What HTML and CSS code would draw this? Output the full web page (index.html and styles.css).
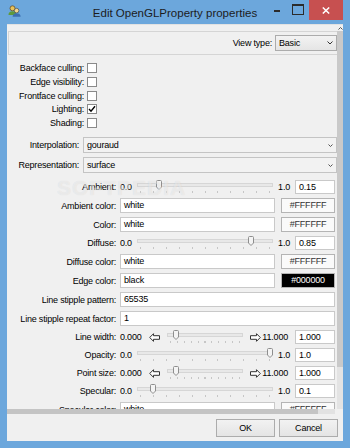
FILE: index.html
```html
<!DOCTYPE html>
<html lang="en">
<head>
  <meta charset="UTF-8">
  <meta name="viewport" content="width=device-width, initial-scale=1.0">
  <title>Edit OpenGLProperty properties</title>
  <link rel="stylesheet" href="styles.css">
</head>
<body>
  <div class="window">
    <!-- title bar -->
    <div class="titlebar">
      <svg class="app-icon" width="13" height="12" viewBox="0 0 13 12">
        <circle cx="4.5" cy="3.3" r="2.5" fill="#e9c35a" stroke="#5b4320" stroke-width=".7"/>
        <path d="M0.5 10 Q0.5 6.3 4.5 6.3 Q8.5 6.3 8.5 10 Z" fill="#5f9a3a"/>
        <circle cx="8.6" cy="5.6" r="2.3" fill="#f3d78e" stroke="#4a4a4a" stroke-width=".7"/>
        <path d="M4.6 11.8 Q4.6 8.3 8.6 8.3 Q12.6 8.3 12.6 11.8 Z" fill="#3d6fb0"/>
      </svg>
      <div class="title">Edit OpenGLProperty properties</div>
      <div class="caption">
        <span class="cap-min"></span>
        <span class="cap-max"></span>
        <span class="cap-close">
          <svg width="8" height="7" viewBox="0 0 8 7"><path d="M0.8 0.5 L7.2 6.5 M7.2 0.5 L0.8 6.5" stroke="#fff" stroke-width="1.5"/></svg>
        </span>
      </div>
    </div>

    <div class="client">
      <div class="scrollarea">
        <div class="viewport">
          <div class="watermark">SOFTPEDIA</div>

          <div class="view-frame">
            <span>View type:</span>
            <div class="combo small">Basic
              <svg width="6" height="4" viewBox="0 0 6 4"><path d="M0.5 0.5 L3 3 L5.5 0.5" stroke="#333" fill="none"/></svg>
            </div>
          </div>

          <div class="checks">
            <label>Backface culling:</label><span class="check"></span>
            <label>Edge visibility:</label><span class="check"></span>
            <label>Frontface culling:</label><span class="check"></span>
            <label>Lighting:</label>
            <span class="check"><svg width="8" height="8" viewBox="0 0 8 8"><path d="M1 4 L3 6.2 L7 1.2" stroke="#000" stroke-width="1.4" fill="none"/></svg></span>
            <label>Shading:</label><span class="check"></span>
          </div>

          <div class="combos">
            <label>Interpolation:</label>
            <div class="combo">gouraud
              <svg width="5" height="3" viewBox="0 0 5 3"><path d="M0.5 0.5 L2.5 2.5 L4.5 0.5" stroke="#555" fill="none"/></svg>
            </div>
            <label>Representation:</label>
            <div class="combo">surface
              <svg width="5" height="3" viewBox="0 0 5 3"><path d="M0.5 0.5 L2.5 2.5 L4.5 0.5" stroke="#555" fill="none"/></svg>
            </div>
          </div>

          <div class="props">
            <label>Ambient:</label>
            <div class="range">
              <span>0.0</span>
              <div class="slider" style="--v:.15"><span class="groove"></span><span class="ticks"></span>
                <svg class="handle" width="6" height="10" viewBox="0 0 6 10"><path d="M0.5 1.5 Q0.5 0.5 1.5 0.5 H4.5 Q5.5 0.5 5.5 1.5 V7 L3 9.5 L0.5 7 Z" fill="#f4f4f4" stroke="#8e8e8e"/></svg>
              </div>
              <span>1.0</span>
              <div class="field">0.15</div>
            </div>

            <label>Ambient color:</label>
            <div class="color-row"><div class="field">white</div><div class="swatch">#FFFFFF</div></div>

            <label>Color:</label>
            <div class="color-row"><div class="field">white</div><div class="swatch">#FFFFFF</div></div>

            <label>Diffuse:</label>
            <div class="range">
              <span>0.0</span>
              <div class="slider" style="--v:.85"><span class="groove"></span><span class="ticks"></span>
                <svg class="handle" width="6" height="10" viewBox="0 0 6 10"><path d="M0.5 1.5 Q0.5 0.5 1.5 0.5 H4.5 Q5.5 0.5 5.5 1.5 V7 L3 9.5 L0.5 7 Z" fill="#f4f4f4" stroke="#8e8e8e"/></svg>
              </div>
              <span>1.0</span>
              <div class="field">0.85</div>
            </div>

            <label>Diffuse color:</label>
            <div class="color-row"><div class="field">white</div><div class="swatch">#FFFFFF</div></div>

            <label>Edge color:</label>
            <div class="color-row"><div class="field">black</div><div class="swatch dark">#000000</div></div>

            <label>Line stipple pattern:</label>
            <div class="field">65535</div>

            <label>Line stipple repeat factor:</label>
            <div class="field">1</div>

            <label>Line width:</label>
            <div class="range wide">
              <span>0.000</span>
              <svg class="arrow" width="11" height="9" viewBox="0 0 11 9"><path d="M0.7 4.5 L4.5 0.7 V2.7 H10.5 V6.3 H4.5 V8.3 Z" fill="#fff" stroke="#333"/></svg>
              <div class="slider" style="--v:.0909"><span class="groove"></span><span class="ticks"></span>
                <svg class="handle" width="6" height="10" viewBox="0 0 6 10"><path d="M0.5 1.5 Q0.5 0.5 1.5 0.5 H4.5 Q5.5 0.5 5.5 1.5 V7 L3 9.5 L0.5 7 Z" fill="#f4f4f4" stroke="#8e8e8e"/></svg>
              </div>
              <svg class="arrow right" width="11" height="9" viewBox="0 0 11 9"><path d="M10.3 4.5 L6.5 0.7 V2.7 H0.5 V6.3 H6.5 V8.3 Z" fill="#fff" stroke="#333"/></svg>
              <span>11.000</span>
              <div class="field">1.000</div>
            </div>

            <label>Opacity:</label>
            <div class="range">
              <span>0.0</span>
              <div class="slider" style="--v:1"><span class="groove"></span><span class="ticks"></span>
                <svg class="handle" width="6" height="10" viewBox="0 0 6 10"><path d="M0.5 1.5 Q0.5 0.5 1.5 0.5 H4.5 Q5.5 0.5 5.5 1.5 V7 L3 9.5 L0.5 7 Z" fill="#f4f4f4" stroke="#8e8e8e"/></svg>
              </div>
              <span>1.0</span>
              <div class="field">1.0</div>
            </div>

            <label>Point size:</label>
            <div class="range wide">
              <span>0.000</span>
              <svg class="arrow" width="11" height="9" viewBox="0 0 11 9"><path d="M0.7 4.5 L4.5 0.7 V2.7 H10.5 V6.3 H4.5 V8.3 Z" fill="#fff" stroke="#333"/></svg>
              <div class="slider" style="--v:.0909"><span class="groove"></span><span class="ticks"></span>
                <svg class="handle" width="6" height="10" viewBox="0 0 6 10"><path d="M0.5 1.5 Q0.5 0.5 1.5 0.5 H4.5 Q5.5 0.5 5.5 1.5 V7 L3 9.5 L0.5 7 Z" fill="#f4f4f4" stroke="#8e8e8e"/></svg>
              </div>
              <svg class="arrow right" width="11" height="9" viewBox="0 0 11 9"><path d="M10.3 4.5 L6.5 0.7 V2.7 H0.5 V6.3 H6.5 V8.3 Z" fill="#fff" stroke="#333"/></svg>
              <span>11.000</span>
              <div class="field">1.000</div>
            </div>

            <label>Specular:</label>
            <div class="range">
              <span>0.0</span>
              <div class="slider" style="--v:.1"><span class="groove"></span><span class="ticks"></span>
                <svg class="handle" width="6" height="10" viewBox="0 0 6 10"><path d="M0.5 1.5 Q0.5 0.5 1.5 0.5 H4.5 Q5.5 0.5 5.5 1.5 V7 L3 9.5 L0.5 7 Z" fill="#f4f4f4" stroke="#8e8e8e"/></svg>
              </div>
              <span>1.0</span>
              <div class="field">0.1</div>
            </div>

            <label>Specular color:</label>
            <div class="color-row"><div class="field">white</div><div class="swatch">#FFFFFF</div></div>
          </div>
        </div>
        <div class="vbar">
          <span class="vbar-arrow">
            <svg width="5" height="3" viewBox="0 0 5 3"><path d="M0.5 2.5 L2.5 0.5 L4.5 2.5" stroke="#555" fill="none"/></svg>
          </span>
          <span class="vbar-thumb"></span>
        </div>
      </div>
      <div class="hbar">
        <span class="hbar-thumb"></span>
        <span class="hbar-track"></span>
        <span class="hbar-corner"></span>
      </div>
      <div class="footer">
        <button class="btn">OK</button>
        <button class="btn">Cancel</button>
      </div>
    </div>
  </div>
</body>
</html>
```

FILE: styles.css
```css
* {
  box-sizing: border-box;
}
body {
  margin: 0;
  font-family: "Liberation Sans", Arial, sans-serif;
  font-size: 9px;
  letter-spacing: -0.2px;
  color: #000;
}
.window {
  width: 350px;
  height: 448px;
  background: #6ca7dc;
  display: flex;
  flex-direction: column;
  overflow: hidden;
}

/* title bar */
.titlebar {
  height: 24px;
  flex: none;
  display: grid;
  grid-template-columns: 1fr auto 1fr;
  align-items: start;
}
.app-icon {
  display: block;
  margin: 5px 0 0 8px;
}
.title {
  font-size: 11.5px;
  letter-spacing: 0;
  color: #1c1c1c;
  line-height: 26px;
  white-space: nowrap;
}
.caption {
  display: flex;
  justify-content: flex-end;
  gap: 2px;
  padding-right: 7px;
}
.cap-min, .cap-max, .cap-close {
  height: 20px;
  display: flex;
  align-items: center;
  justify-content: center;
}
.cap-min {
  width: 18px;
}
.cap-min::before {
  content: "";
  width: 6px;
  height: 2px;
  margin-top: 2px;
  background: #2b2b2b;
}
.cap-max {
  width: 19px;
}
.cap-max::before {
  content: "";
  width: 10px;
  height: 8px;
  margin-top: -2px;
  border: 1px solid #2b2b2b;
  border-top-width: 2px;
}
.cap-close {
  width: 34px;
  background: #c75050;
}
.cap-close svg {
  display: block;
}

/* client area */
.client {
  flex: 1;
  min-height: 0;
  margin: 0 7px 7px;
  background: #f0f0f0;
  border-top: 1px solid #e2e2e2;
  display: flex;
  flex-direction: column;
}
.scrollarea {
  height: 384px;
  flex: none;
  display: flex;
}
.viewport {
  flex: 1;
  overflow: hidden;
  position: relative;
}
.vbar {
  width: 6px;
  background: #e3e3e3;
  display: flex;
  flex-direction: column;
}
.vbar-arrow {
  height: 6px;
  display: flex;
  align-items: center;
  justify-content: center;
  background: #f0f0f0;
}
.vbar-arrow svg {
  display: block;
}
.vbar-thumb {
  height: 336px;
  background: #c9c9c9;
}
.hbar {
  height: 5px;
  flex: none;
  display: flex;
}
.hbar-thumb {
  flex: 1;
  background: #c4c4c4;
}
.hbar-track {
  width: 17px;
  background: #e2e2e2;
}
.hbar-corner {
  width: 8px;
  background: #f0f0f0;
}
.footer {
  flex: 1;
  display: flex;
  justify-content: flex-end;
  align-items: center;
  gap: 4px;
  padding-right: 5px;
}
.btn {
  width: 59px;
  height: 18px;
  padding: 0;
  border: 1px solid #acacac;
  background: linear-gradient(#f2f2f2, #e4e4e4);
  font: inherit;
  letter-spacing: inherit;
  color: #000;
}

/* faint watermark over the form */
.watermark {
  position: absolute;
  top: 151px;
  left: 50px;
  font-size: 21px;
  font-weight: bold;
  letter-spacing: 1px;
  color: rgba(255, 255, 255, 0.45);
  text-shadow: 0 0 1px rgba(0, 0, 0, 0.1);
  pointer-events: none;
  z-index: 2;
}

/* view type */
.view-frame {
  margin: 6px -2px 0 1px;
  height: 24px;
  border: 1px solid #d5d5d5;
  display: flex;
  justify-content: flex-end;
  align-items: center;
  gap: 3px;
  padding-right: 1px;
}
.combo {
  height: 16px;
  border: 1px solid #acacac;
  background: linear-gradient(#f3f3f3, #e5e5e5);
  display: flex;
  align-items: center;
  justify-content: space-between;
  padding: 0 3px;
  white-space: nowrap;
}
.combo.small {
  width: 62px;
}
.combos .combo {
  border-color: #c4c4c4;
  background: #f2f2f2;
}

/* check boxes */
.checks {
  display: grid;
  grid-template-columns: 77px 10px;
  column-gap: 3px;
  row-gap: 3.75px;
  margin-top: 8px;
  align-items: center;
}
.checks label, .combos label, .props label {
  text-align: right;
  white-space: nowrap;
}
.checks label {
  line-height: 10px;
}
.check {
  width: 10px;
  height: 10px;
  border: 1px solid #8a8a8a;
  background: #fff;
  display: flex;
  align-items: center;
  justify-content: center;
}

.combos {
  display: grid;
  grid-template-columns: 72px 1fr;
  column-gap: 4px;
  row-gap: 4px;
  margin-top: 9px;
  align-items: center;
}

/* property rows */
.props {
  display: grid;
  grid-template-columns: 109px 1fr;
  column-gap: 4px;
  row-gap: 4px;
  margin-top: 7px;
  padding-right: 2px;
  align-items: center;
}
.field {
  height: 15px;
  border: 1px solid #c9c9c9;
  background: #fff;
  padding: 0 3px;
  line-height: 13px;
  white-space: nowrap;
  overflow: hidden;
}
.color-row {
  display: flex;
  gap: 6px;
}
.color-row .field {
  flex: 1;
}
.swatch {
  width: 54px;
  height: 15px;
  border: 1px solid #b4b4b4;
  background: #fafafa;
  text-align: center;
  line-height: 13px;
  color: #333;
}
.swatch.dark {
  background: #000;
  color: #fff;
}
.range {
  display: flex;
  align-items: center;
  gap: 5px;
  height: 14px;
  white-space: nowrap;
}
.range.wide {
  gap: 7px;
}
.range .field {
  width: 40px;
  height: 14px;
  line-height: 12px;
  flex: none;
}
.arrow {
  display: block;
  flex: none;
}
.arrow.right {
  margin-right: -6px;
}
.slider {
  flex: 1;
  position: relative;
  height: 14px;
}
.groove {
  position: absolute;
  left: 0;
  right: 0;
  top: 3px;
  height: 4px;
  background: #e8e8e8;
  border: 1px solid #d6d6d6;
}
.ticks {
  position: absolute;
  left: 3px;
  right: 3px;
  top: 11px;
  height: 2px;
  background: repeating-linear-gradient(to right, #c6c6c6 0 1px, transparent 1px 10%);
  border-right: 1px solid #c6c6c6;
}
.handle {
  position: absolute;
  top: 0;
  left: calc(var(--v) * (100% - 6px));
  display: block;
}
```
